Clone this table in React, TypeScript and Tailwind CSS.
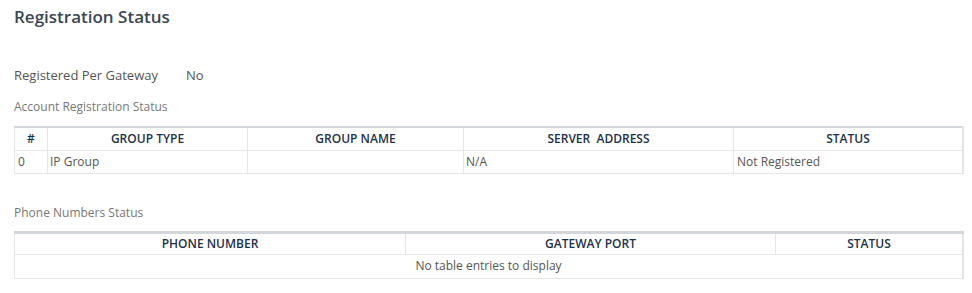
import React from "react";

const accountCols = [
  { label: "#", w: "w-[33px]" },
  { label: "GROUP TYPE", w: "w-[200px]" },
  { label: "GROUP NAME", w: "w-[216px]" },
  { label: "SERVER  ADDRESS", w: "w-[270px]" },
  { label: "STATUS", w: "" },
];

const phoneCols = [
  { label: "PHONE NUMBER", w: "w-[391px]" },
  { label: "GATEWAY PORT", w: "w-[370px]" },
  { label: "STATUS", w: "" },
];

export default function App() {
  return (
    <div
      className="w-[972px] h-[293px] bg-white text-[12px] text-[#555]"
      style={{ fontFamily: '"Open Sans", "Noto Sans", sans-serif' }}
    >
      <div className="pl-[14px] pr-[7px] pt-[4px]">
        <h1 className="text-[17px] leading-[25px] font-semibold text-[#3b4652]">
          Registration Status
        </h1>

        <div className="mt-[37px] flex items-center text-[13px] leading-[18px] text-[#555]">
          <span className="w-[172px]">Registered Per Gateway</span>
          <span>No</span>
        </div>

        <div className="mt-[14px] text-[12px] leading-[17px] text-[#777]">
          Account Registration Status
        </div>

        <table className="mt-[11px] w-[950px] border-collapse table-fixed border-t-[2px] border-t-[#d3d7db] border-r-[2px] border-r-[#e4e4e4]">
          <thead>
            <tr className="h-[23px]">
              {accountCols.map((c) => (
                <th
                  key={c.label}
                  className={`${c.w} border border-[#e6e6e6] border-t-0 p-0 text-center font-semibold text-[12px] text-[#1d3149] whitespace-pre`}
                >
                  {c.label}
                </th>
              ))}
            </tr>
          </thead>
          <tbody>
            <tr className="h-[23px]">
              <td className="border border-[#e6e6e6] px-[3px] py-0">0</td>
              <td className="border border-[#e6e6e6] px-[2px] py-0">IP Group</td>
              <td className="border border-[#e6e6e6] px-[2px] py-0"></td>
              <td className="border border-[#e6e6e6] px-[2px] py-0">N/A</td>
              <td className="border border-[#e6e6e6] px-[3px] py-0">Not Registered</td>
            </tr>
          </tbody>
        </table>

        <div className="mt-[30px] text-[12px] leading-[17px] text-[#777]">
          Phone Numbers Status
        </div>

        <table className="mt-[10px] w-[950px] border-collapse table-fixed border-t-[3px] border-t-[#d3d7db] border-r-[2px] border-r-[#e4e4e4]">
          <thead>
            <tr className="h-[22px]">
              {phoneCols.map((c) => (
                <th
                  key={c.label}
                  className={`${c.w} border border-[#e6e6e6] border-t-0 p-0 text-center font-semibold text-[12px] text-[#1d3149]`}
                >
                  {c.label}
                </th>
              ))}
            </tr>
          </thead>
          <tbody>
            <tr className="h-[24px]">
              <td colSpan={3} className="border border-[#e6e6e6] p-0 text-center">
                No table entries to display
              </td>
            </tr>
          </tbody>
        </table>
      </div>
    </div>
  );
}
